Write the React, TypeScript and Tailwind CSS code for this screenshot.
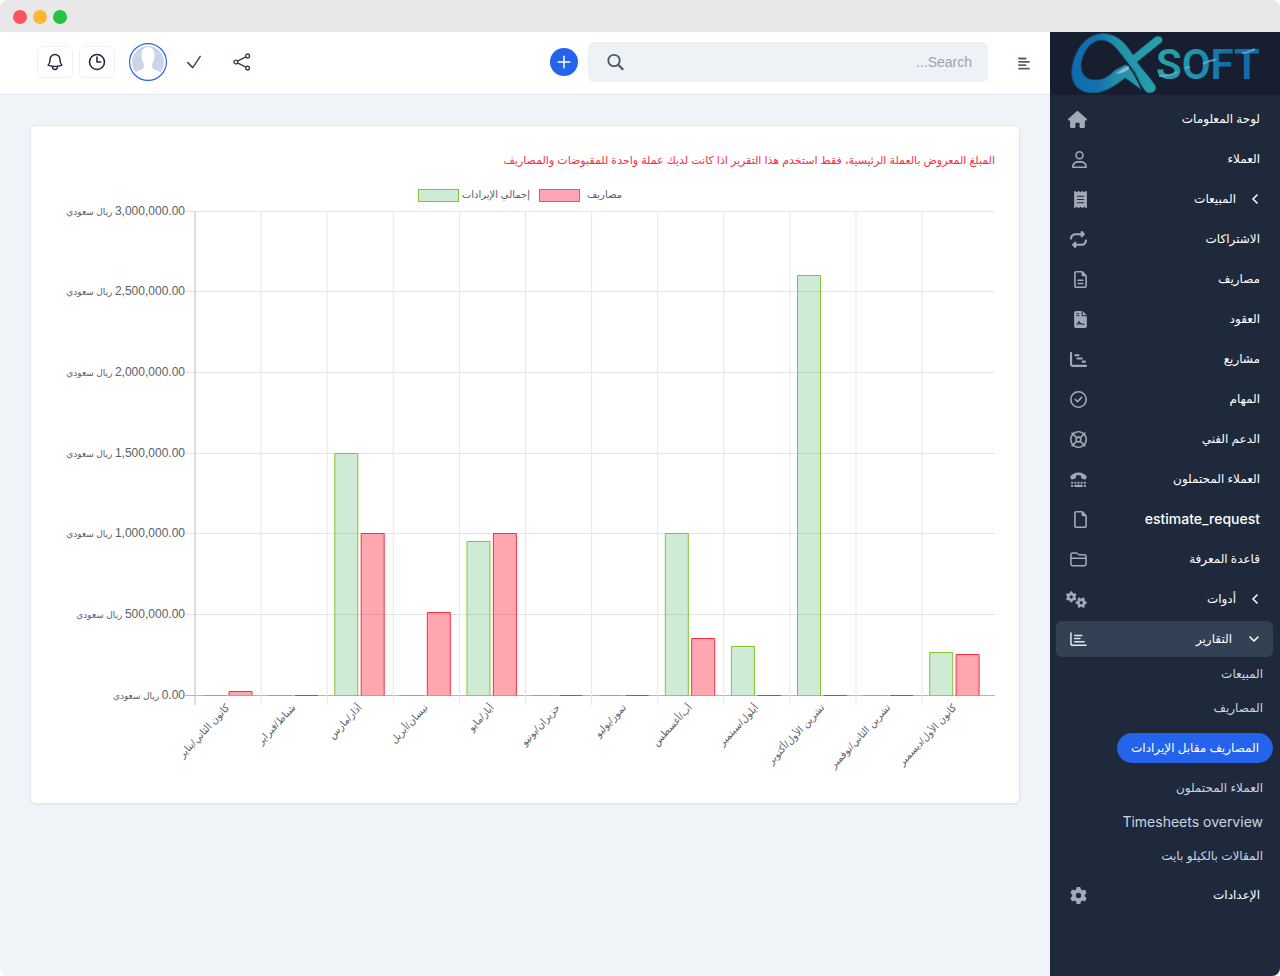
import type { ReactNode } from "react";
import {
  FaHouse,
  FaRegUser,
  FaReceipt,
  FaRepeat,
  FaRegFileLines,
  FaFileContract,
  FaChartGantt,
  FaRegCircleCheck,
  FaRegLifeRing,
  FaTty,
  FaRegFile,
  FaGears,
  FaGear,
} from "react-icons/fa6";
import { ChevronDown, ChevronLeft, Plus } from "lucide-react";

const narrow = "h-[17px] w-[13px]";
const medium = "h-[17px] w-[15px]";
const square = "h-[17px] w-[17px]";
const wide = "h-[17px] w-[19px]";
const extraWide = "h-[17px] w-[21px]";

function FolderIcon() {
  return (
    <svg viewBox="0 0 18 17" className={square} fill="none" stroke="currentColor" strokeWidth="1.6" strokeLinejoin="round">
      <path d="M1 3.4C1 2.2 1.8 1.5 2.9 1.5h3.6c.6 0 1 .2 1.4.6l1 .9c.4.4.8.5 1.4.5h4.8c1.1 0 1.9.8 1.9 1.9v7.7c0 1.1-.8 1.9-1.9 1.9H2.9c-1.1 0-1.9-.8-1.9-1.9z" />
      <path d="M1 7.2h16" />
    </svg>
  );
}

function ReportIcon() {
  return (
    <svg viewBox="0 0 18 17" className={square} fill="none" stroke="currentColor" strokeWidth="1.6" strokeLinecap="round" strokeLinejoin="round">
      <path d="M1 1.5v11.2c0 1.2.8 2 2 2h14M5 4.2h7.5M5 7.5h5.5M5 10.8h10" />
    </svg>
  );
}

function OutlineIcon({ d, strokeWidth = 1.7 }: { d: string; strokeWidth?: number }) {
  return (
    <svg viewBox="0 0 24 24" className="size-5" fill="none" stroke="currentColor" strokeWidth={strokeWidth} strokeLinecap="round" strokeLinejoin="round">
      <path d={d} />
    </svg>
  );
}

const bellPath =
  "M14.857 17.082a23.848 23.848 0 005.454-1.31A8.967 8.967 0 0118 9.75V9A6 6 0 006 9v.75a8.967 8.967 0 01-2.312 6.022c1.733.64 3.56 1.085 5.455 1.31m5.714 0a24.255 24.255 0 01-5.714 0m5.714 0a3 3 0 11-5.714 0";
const clockPath = "M12 6v6h4.5m4.5 0a9 9 0 11-18 0 9 9 0 0118 0z";
const checkPath = "M4.5 12.75l6 6 9-13.5";

function SearchIcon() {
  return (
    <svg viewBox="0 0 18 18" className="size-[18px]" fill="none" stroke="#475569" strokeWidth="1.8">
      <circle cx="8" cy="7.5" r="5.7" />
      <path d="M12.2 11.7l5 5" strokeWidth="2.2" />
    </svg>
  );
}

function ShareIcon() {
  return (
    <svg viewBox="0 0 18 18" className="size-[18px]" fill="none" stroke="currentColor" strokeWidth="1.4">
      <circle cx="2.8" cy="9" r="1.9" />
      <circle cx="14.6" cy="2.9" r="1.9" />
      <circle cx="14.6" cy="15.1" r="1.9" />
      <path d="M4.5 8.1l8.4-4.2M4.5 9.9l8.4 4.2" />
    </svg>
  );
}

function Avatar() {
  return (
    <svg viewBox="0 0 38 38" className="size-[38px]">
      <defs>
        <clipPath id="avatar-clip">
          <circle cx="19" cy="19" r="16" />
        </clipPath>
      </defs>
      <circle cx="19" cy="19" r="18.4" fill="#fff" stroke="#2563eb" strokeWidth="1.2" />
      <g clipPath="url(#avatar-clip)">
        <rect width="38" height="38" fill="#cbd5e5" />
        <path
          fill="#fff"
          d="M19 4C23 4 25.5 7 25.5 12C25.5 16 24.5 19 23 21C22.6 23.5 23 25 25 26.5C27 27.5 31 28 33 31V38H5V31C7 28 11 27.5 13 26.5C15 25 15.4 23.5 15 21C13.5 19 12.5 16 12.5 12C12.5 7 15 4 19 4Z"
        />
      </g>
    </svg>
  );
}

function Logo() {
  return (
    <svg viewBox="0 0 230 63" className="h-[63px] w-full" role="img" aria-label="SOFT" direction="ltr">
      <defs>
        <linearGradient id="loop" x1="0" x2="1" y1="0" y2="0">
          <stop offset="0" stopColor="#0f6cae" />
          <stop offset="0.28" stopColor="#1272b0" />
          <stop offset="0.5" stopColor="#2290aa" />
          <stop offset="1" stopColor="#27a3a8" />
        </linearGradient>
        <linearGradient id="word" x1="0" x2="1" y1="0" y2="0">
          <stop offset="0" stopColor="#27a3a8" />
          <stop offset="0.4" stopColor="#2192ad" />
          <stop offset="0.65" stopColor="#136fae" />
          <stop offset="1" stopColor="#126bab" />
        </linearGradient>
      </defs>
      <path
        fill="url(#loop)"
        stroke="#16506f"
        strokeWidth="0.8"
        d="M53 1.5C30 2 20 30 22 45C24 56 33 61 43 61C54 61 65 54 75 46C80 49 86 54 91.7 58C89 51 88 46 85 40C82 35 79 32 75 33C70 35 68 37 65 38C60 43 54 48 46 48C38 48 32 45 31 35C31 25 38 8 52 8C62 9 67 17 78 31C84 40 88 46 90 51C94 57 95 61 100 61C106 60 107 56 105 53C99 44 92 37 87 30L112 10C114 5 109 3 105 5L83 23C78 15 70 2 53 1.5Z"
      />
      <path fill="none" stroke="#171e30" strokeWidth="1.3" d="M76 31C83 38 87 46 92 58" />
      <path fill="#8fb4de" d="M66 42C70 38 74 36 78 34C80 35 79 38 76 39C73 41 70 41 66 42Z" />
      <text x="106" y="47" fontFamily="Roboto, sans-serif" fontWeight="600" fontSize="42" fill="url(#word)">
        SOFT
      </text>
      <path fill="none" stroke="#66b4df" strokeOpacity="0.75" strokeWidth="2" d="M109 44c7 0 13-1 18-4M135 36l5-1M153 32c5-3 8-4 13-4M192 21c5 0 9-2 13-4" />
    </svg>
  );
}

type Item = { label: string; icon: ReactNode; arrow?: "closed" | "open"; latin?: boolean };

const items: Item[] = [
  { label: "لوحة المعلومات", icon: <FaHouse className={wide} /> },
  { label: "العملاء", icon: <FaRegUser className={medium} /> },
  { label: "المبيعات", icon: <FaReceipt className={narrow} />, arrow: "closed" },
  { label: "الاشتراكات", icon: <FaRepeat className={square} /> },
  { label: "مصاريف", icon: <FaRegFileLines className={narrow} /> },
  { label: "العقود", icon: <FaFileContract className={narrow} /> },
  { label: "مشاريع", icon: <FaChartGantt className={square} /> },
  { label: "المهام", icon: <FaRegCircleCheck className={square} /> },
  { label: "الدعم الفني", icon: <FaRegLifeRing className={square} /> },
  { label: "العملاء المحتملون", icon: <FaTty className={square} /> },
  { label: "estimate_request", icon: <FaRegFile className={narrow} />, latin: true },
  { label: "قاعدة المعرفة", icon: <FolderIcon /> },
  { label: "أدوات", icon: <FaGears className={extraWide} />, arrow: "closed" },
  { label: "التقارير", icon: <ReportIcon />, arrow: "open" },
];

const reports = [
  { label: "المبيعات" },
  { label: "المصاريف" },
  { label: "المصاريف مقابل الإيرادات", active: true },
  { label: "العملاء المحتملون" },
  { label: "Timesheets overview", latin: true },
  { label: "المقالات بالكيلو بايت" },
];

function NavItem({ label, icon, arrow, latin }: Item) {
  const open = arrow === "open";
  return (
    <a
      href="#"
      className={`flex h-9 items-center rounded-md pr-[13px] pl-[7px] font-medium ${latin ? "text-sm" : "text-xs"} ${
        open ? "bg-[#334155] text-white" : "text-white"
      }`}
    >
      {arrow && (
        <span className={`flex justify-center ${open ? "ml-4 w-3" : "ml-3.5 w-2.5"}`}>
          {open ? <ChevronDown className="size-4 shrink-0" strokeWidth={2.4} /> : <ChevronLeft className="size-4 shrink-0" strokeWidth={2.4} />}
        </span>
      )}
      <span className="grow">{label}</span>
      <span className={`flex w-6 shrink-0 justify-start ${open ? "text-[#e2e8f0]" : "text-[#a3aab6]"}`}>{icon}</span>
    </a>
  );
}

function Sidebar() {
  return (
    <aside className="flex w-[230px] shrink-0 flex-col bg-[#1e293b]">
      <a href="#" className="block bg-[#171e30]">
        <Logo />
      </a>
      <nav className="flex flex-col gap-1 py-1.5 pr-[7px] pl-1.5">
        {items.map((item) => (
          <NavItem key={item.label} {...item} />
        ))}
        <ul className="-mt-1 flex flex-col items-start">
          {reports.map((r) =>
            r.active ? (
              <li key={r.label} className="my-2">
                <a href="#" className="flex h-[30px] items-center rounded-full bg-[#2563eb] px-3.5 text-xs font-medium text-white">
                  {r.label}
                </a>
              </li>
            ) : (
              <li key={r.label}>
                <a href="#" className={`flex h-[34px] items-center px-2.5 text-[#cbd5e1] ${r.latin ? "text-sm" : "text-xs"}`}>
                  {r.label}
                </a>
              </li>
            ),
          )}
        </ul>
        <NavItem label="الإعدادات" icon={<FaGear className={square} />} />
      </nav>
    </aside>
  );
}

function Header() {
  return (
    <header className="flex h-[63px] items-center border-b border-[#e2e8f0] bg-white pr-5 pb-0.5 pl-[37px] text-[#1e293b]">
      <button aria-label="القائمة" className="ml-[30px] flex w-3 justify-center text-[#565f6e]">
        <svg viewBox="0 0 12 13" className="mt-0.5 h-[13px] w-3 shrink-0" fill="none" stroke="currentColor" strokeWidth="1.8" strokeLinecap="round">
          <path d="M1 1.5h6.5M1 4.8h10M1 8.2h6.5M1 11.6h10" />
        </svg>
      </button>
      <label className="flex h-10 w-[400px] items-center rounded-md bg-[#eef2f6] pr-4 pl-[18px]">
        <input
          type="search"
          aria-label="Search"
          placeholder="Search..."
          className="min-w-0 grow bg-transparent text-sm outline-none [font-family:'Liberation_Sans','DejaVu_Sans',sans-serif] placeholder:text-[#9ca3af]"
        />
        <SearchIcon />
      </label>
      <button aria-label="إضافة" className="mr-2.5 flex size-7 items-center justify-center rounded-full bg-[#2563eb] text-white">
        <Plus className="size-5" strokeWidth={1.8} />
      </button>
      <div className="mr-auto flex items-center" dir="ltr">
        <button aria-label="الإشعارات" className="flex h-8 w-9 items-center justify-center rounded-md border border-[#f1f1f5]">
          <OutlineIcon d={bellPath} />
        </button>
        <button aria-label="المؤقت" className="ml-1.5 flex h-8 w-9 items-center justify-center rounded-md border border-[#f1f1f5]">
          <OutlineIcon d={clockPath} strokeWidth={1.9} />
        </button>
        <button aria-label="الملف الشخصي" className="ml-3.5">
          <Avatar />
        </button>
        <button aria-label="المهام" className="ml-[17px] text-[#334155]">
          <OutlineIcon d={checkPath} />
        </button>
        <button aria-label="مشاركة" className="ml-[29px] text-[#334155]">
          <ShareIcon />
        </button>
      </div>
    </header>
  );
}

const months = [
  { name: "كانون الثاني/يناير", income: 0, expense: 22000 },
  { name: "شباط/فبراير", income: 0, expense: 0 },
  { name: "آذار/مارس", income: 1500000, expense: 1000000 },
  { name: "نيسان/أبريل", income: 0, expense: 512000 },
  { name: "أيار/مايو", income: 952000, expense: 1000000 },
  { name: "حزيران/يونيو", income: 0, expense: 0 },
  { name: "تموز/يوليو", income: 0, expense: 0 },
  { name: "آب/أغسطس", income: 1000000, expense: 350000 },
  { name: "أيلول/سبتمبر", income: 300000, expense: 0 },
  { name: "تشرين الأول/أكتوبر", income: 2600000, expense: 0 },
  { name: "تشرين الثاني/نوفمبر", income: 0, expense: 0 },
  { name: "كانون الأول/ديسمبر", income: 265000, expense: 252000 },
];

const ticks = ["3,000,000.00", "2,500,000.00", "2,000,000.00", "1,500,000.00", "1,000,000.00", "500,000.00", "0.00"];

const LEFT = 140;
const TOP = 25.5;
const BASE = 509.5;
const STEP = 66.1;
const BAR = 23;

function Bar({ x, value, fill, stroke }: { x: number; value: number; fill: string; stroke: string }) {
  const y = Math.floor(BASE - 0.5 - (value / 3000000) * (BASE - TOP)) + 0.5;
  if (value === 0) return <path d={`M${x} ${BASE}h${BAR}`} stroke={stroke} />;
  return (
    <g>
      <rect x={x} y={y} width={BAR} height={BASE - y} fill={fill} />
      <path d={`M${x} ${BASE}V${y}h${BAR}V${BASE}`} fill="none" stroke={stroke} />
    </g>
  );
}

function Chart() {
  return (
    <svg
      viewBox="0 0 940 593"
      className="mt-4 block h-auto w-full [font-family:'Liberation_Sans','DejaVu_Sans',sans-serif]"
      role="img"
      aria-label="المصاريف مقابل الإيرادات"
    >
      <rect x="363.5" y="3.5" width="40" height="12" fill="#cfebd6" stroke="#84c529" />
      <rect x="484.5" y="3.5" width="40" height="12" fill="#fda5b2" stroke="#fc2d42" strokeOpacity="0.8" />
      <g fill="#5b6068" fontSize="10" direction="rtl">
        <text x="475" y="12">إجمالي الإيرادات</text>
        <text x="567" y="12">مصاريف</text>
      </g>
      {ticks.map((t, i) => {
        const line = Math.floor(TOP - 0.5 + ((BASE - TOP) / 6) * i) + 0.5;
        return (
          <g key={t}>
            <path d={`M130 ${line}H940`} stroke={i === 6 ? "#b4b5b8" : "#e4e4e4"} />
            <text x="130" y={line + 3.5} direction="rtl" fill="#5b6068" fontSize="12">
              {t}
              <tspan fontSize="9"> ريال سعودي</tspan>
            </text>
          </g>
        );
      })}
      {months.map((m, i) => {
        const x = LEFT + STEP * i;
        return (
          <g key={m.name}>
            <path d={`M${x} ${TOP}V519`} stroke={i === 0 ? "#b9bcc1" : "#e7e7e7"} />
            <Bar x={x + 7.6} value={m.income} fill="#0f9b3233" stroke="#84c529" />
            <Bar x={x + 34} value={m.expense} fill="#fc2d426b" stroke="#fc2d42" />
            <text transform={`translate(${x + 35} 522) rotate(-47)`} direction="rtl" fill="#5b6068" fontSize="10">
              {m.name}
            </text>
          </g>
        );
      })}
    </svg>
  );
}

export default function App() {
  return (
    <div className="bg-white">
      <div
        dir="rtl"
        className="flex min-h-screen flex-col overflow-hidden rounded-lg bg-[#f0f4f9] [font-family:Inter,'DejaVu_Sans',sans-serif]"
      >
        <div dir="ltr" className="flex h-8 items-center gap-1.5 bg-[#e8e8e8] pt-0.5 pl-[13px]">
          <span className="size-3.5 rounded-full bg-[#fb545c]" />
          <span className="size-3.5 rounded-full bg-[#fdb732]" />
          <span className="size-3.5 rounded-full bg-[#25c440]" />
        </div>
        <div className="flex grow">
          <Sidebar />
          <div className="flex min-w-0 grow flex-col">
            <Header />
            <main className="p-[30px]">
              <section className="rounded-md border border-[#e2e8f0] bg-white p-6 shadow-xs">
                <p className="text-[11px] leading-5 text-[#fc2d42]">
                  المبلغ المعروض بالعملة الرئيسية، فقط استخدم هذا التقرير اذا كانت لديك عملة واحدة للمقبوضات والمصاريف
                </p>
                <Chart />
              </section>
            </main>
          </div>
        </div>
      </div>
    </div>
  );
}
